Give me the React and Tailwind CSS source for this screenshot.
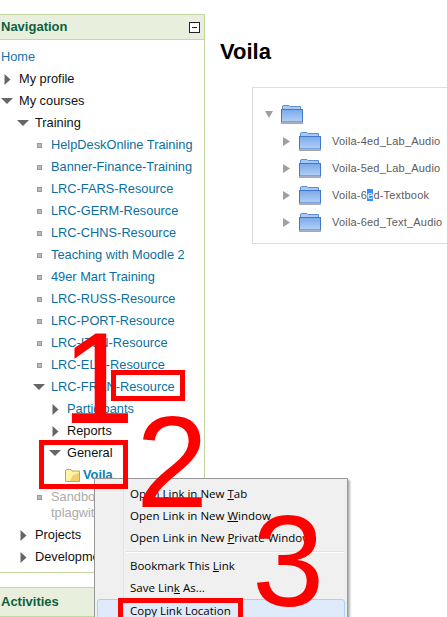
const COURSES_TOP = ['HelpDeskOnline Training', 'Banner-Finance-Training', 'LRC-FARS-Resource', 'LRC-GERM-Resource', 'LRC-CHNS-Resource', 'Teaching with Moodle 2', '49er Mart Training', 'LRC-RUSS-Resource', 'LRC-PORT-Resource', 'LRC-ITLN-Resource', 'LRC-ELN-Resource']

const depthPad = {
  0: 'pl-[1px]',
  1: 'pl-[17px]',
  2: 'pl-[33px]',
  3: 'pl-[49px]',
}

function Closed() {
  return (
    <svg width="7" height="11" viewBox="0 0 7 11" className="ml-[3px]">
      <path d="M0.5 0 L6.5 5.5 L0.5 11 Z" fill="#666" />
    </svg>
  )
}

function Open() {
  return (
    <svg width="12" height="6" viewBox="0 0 12 6">
      <path d="M0 0 L12 0 L6 6 Z" fill="#666" />
    </svg>
  )
}

function Bullet() {
  return <span className="block ml-[4px] w-[5px] h-[5px] bg-[#bbb] border border-[#999]" />
}

function Row({ depth, icon, children, className = 'text-[#111]' }) {
  return (
    <div className={`flex items-center h-[22px] whitespace-nowrap ${depthPad[depth]}`}>
      <span className="flex items-center w-[18px] shrink-0">{icon}</span>
      <span className={className}>{children}</span>
    </div>
  )
}

function YellowFolder() {
  return (
    <svg width="15" height="13" viewBox="0 0 15 13">
      <path d="M0.5 2 L1.5 0.5 L6 0.5 L7 2 L14.5 2 L14.5 12.5 L0.5 12.5 Z" fill="#fdf3a0" stroke="#b8a860" />
      <path d="M8 6 L14 4 L14 12 L5 12 Z" fill="#e8c060" opacity="0.7" />
    </svg>
  )
}

function BlueFolder() {
  return (
    <svg width="22" height="19" viewBox="0 0 22 19" className="shrink-0">
      <defs>
        <linearGradient id="fold" x1="0" y1="0" x2="0" y2="1">
          <stop offset="0" stopColor="#7aa9ea" />
          <stop offset="1" stopColor="#b4d0f6" />
        </linearGradient>
      </defs>
      <path d="M1.5 5 L1.5 1 L2.5 0.5 L8 0.5 L9 1.5 L19.5 1.5 L19.5 5 Z" fill="#a9c8f2" stroke="#5b8fd6" />
      <rect x="0.5" y="4.5" width="21" height="12.5" fill="url(#fold)" stroke="#3f78cc" />
      <rect x="0" y="17.5" width="22" height="1.5" fill="#a8a8a8" />
    </svg>
  )
}

function FileRow({ name }) {
  return (
    <div className="flex items-center h-[27px]">
      <svg width="7" height="9" viewBox="0 0 7 9" className="ml-[30px] mr-[9px] shrink-0">
        <path d="M0 0 L7 4.5 L0 9 Z" fill="#a0a0a0" />
      </svg>
      <BlueFolder />
      <span className="ml-[11px] text-[11px] tracking-[0.2px] text-[#5c5c5c] whitespace-nowrap">{name}</span>
    </div>
  )
}

function MenuItem({ children }) {
  return <div className="h-[22px] leading-[22px] pl-[33px] whitespace-nowrap">{children}</div>
}

function ContextMenu() {
  return (
    <div className="absolute left-[94px] top-[478px] w-[254px] h-[160px] bg-[#f0f0f0] border border-[#979797] pt-[4px] pr-[2px] pl-[2px] font-['Open_Sans',sans-serif] text-[11.5px] text-black shadow-[2px_2px_2px_rgba(0,0,0,0.3)]">
      <div className="absolute left-[28px] top-0 bottom-0 w-px bg-[#e2e3e3]" />
      <MenuItem>Open Link in New <u>T</u>ab</MenuItem>
      <MenuItem>Open Link in New <u>W</u>indow</MenuItem>
      <MenuItem>Open Link in New <u>P</u>rivate Window</MenuItem>
      <div className="ml-[29px] mr-[1px] my-[2px] h-[2px] bg-[#e0e0e0] border-b border-white" />
      <MenuItem>Bookmark This <u>L</u>ink</MenuItem>
      <MenuItem>Save Lin<u>k</u> As...</MenuItem>
      <div className="h-[24px] leading-[22px] pl-[32px] rounded-[3px] border border-[#aed0f0] bg-[#dfeafa]">Copy Link Location</div>
    </div>
  )
}

function Annotations() {
  return (
    <>
      <div className="absolute left-[111px] top-[370px] w-[74px] h-[31px] border-[5px] border-[#f00]" />
      <div className="absolute left-[39px] top-[440px] w-[89px] h-[49px] border-[5px] border-[#f00]" />
      <div className="absolute left-[118px] top-[598px] w-[125px] h-[30px] border-[5px] border-[#f00]" />
      <span className="absolute left-[62px] top-[303px] text-[130px] leading-[150px] text-[#f00]">1</span>
      <span className="absolute left-[136px] top-[387px] text-[130px] leading-[150px] text-[#f00]">2</span>
      <span className="absolute left-[252px] top-[486px] text-[130px] leading-[150px] text-[#f00]">3</span>
    </>
  )
}

export default function App() {
  return (
    <div className="relative flex w-[447px] h-[617px] overflow-hidden bg-white font-['Liberation_Sans',sans-serif] text-[12.8px]">
      <aside className="w-[205px] shrink-0 pt-[14px]">
        <div className="h-[559px] border border-l-0 border-[#c4d7a0]">
          <div className="flex items-center justify-between h-[25px] pl-[1px] pr-[4px] bg-[#e8efdc] border-b border-[#c4d7a0]">
            <span className="font-bold text-[13px] text-[#0f5f3f]">Navigation</span>
            <span className="flex items-center justify-center w-[11px] h-[11px] border border-[#222] bg-white">
              <span className="block w-[5px] h-px bg-[#222]" />
            </span>
          </div>
          <div className="pt-[6px]">
            <div className="flex items-center h-[22px] pl-[1px] text-[#1175a8]">Home</div>
            <Row depth={0} icon={<Closed />}>My profile</Row>
            <Row depth={0} icon={<Open />}>My courses</Row>
            <Row depth={1} icon={<Open />}>Training</Row>
            {COURSES_TOP.map((name) => (
              <Row key={name} depth={2} icon={<Bullet />} className="text-[#0b6f9e]">{name}</Row>
            ))}
            <Row depth={2} icon={<Open />} className="text-[#0b6f9e]">LRC-FREN-Resource</Row>
            <Row depth={3} icon={<Closed />} className="text-[#0b6f9e]">Participants</Row>
            <Row depth={3} icon={<Closed />}>Reports</Row>
            <Row depth={3} icon={<Open />}>General</Row>
            <div className="flex items-center h-[22px] pl-[65px]">
              <span className="w-[18px] shrink-0"><YellowFolder /></span>
              <span className="font-bold text-[#0a83b5]">Voila</span>
            </div>
            <div className="flex pl-[33px] pt-[3px] pb-[3px]">
              <span className="flex items-center w-[18px] h-[16px] shrink-0"><Bullet /></span>
              <span className="leading-[16px] text-[#aaa]">Sandbox<br />tplagwit</span>
            </div>
            <Row depth={1} icon={<Closed />}>Projects</Row>
            <Row depth={1} icon={<Closed />}>Development</Row>
          </div>
        </div>
        <div className="mt-[14px] h-[30px] flex items-center pl-[1px] bg-[#e8efdc] border border-l-0 border-[#c4d7a0]">
          <span className="font-bold text-[13px] text-[#0f5f3f]">Activities</span>
        </div>
      </aside>
      <main className="flex-1 min-w-0 pl-[15px] pt-[40px]">
        <h2 className="font-bold text-[22px] leading-[24px] text-black">Voila</h2>
        <div className="mt-[23px] ml-[32px] h-[157px] border border-r-0 border-[#ddd] pt-[13px]">
          <div className="flex items-center h-[27px]">
            <svg width="8" height="7" viewBox="0 0 8 7" className="ml-[12px] mr-[8px] shrink-0">
              <path d="M0 0 L8 0 L4 7 Z" fill="#a0a0a0" />
            </svg>
            <BlueFolder />
          </div>
          <FileRow name="Voila-4ed_Lab_Audio" />
          <FileRow name="Voila-5ed_Lab_Audio" />
          <FileRow name={<>Voila-6<span className="bg-[#3390ff] text-white">e</span>d-Textbook</>} />
          <FileRow name="Voila-6ed_Text_Audio" />
        </div>
      </main>
      <ContextMenu />
      <Annotations />
    </div>
  )
}
